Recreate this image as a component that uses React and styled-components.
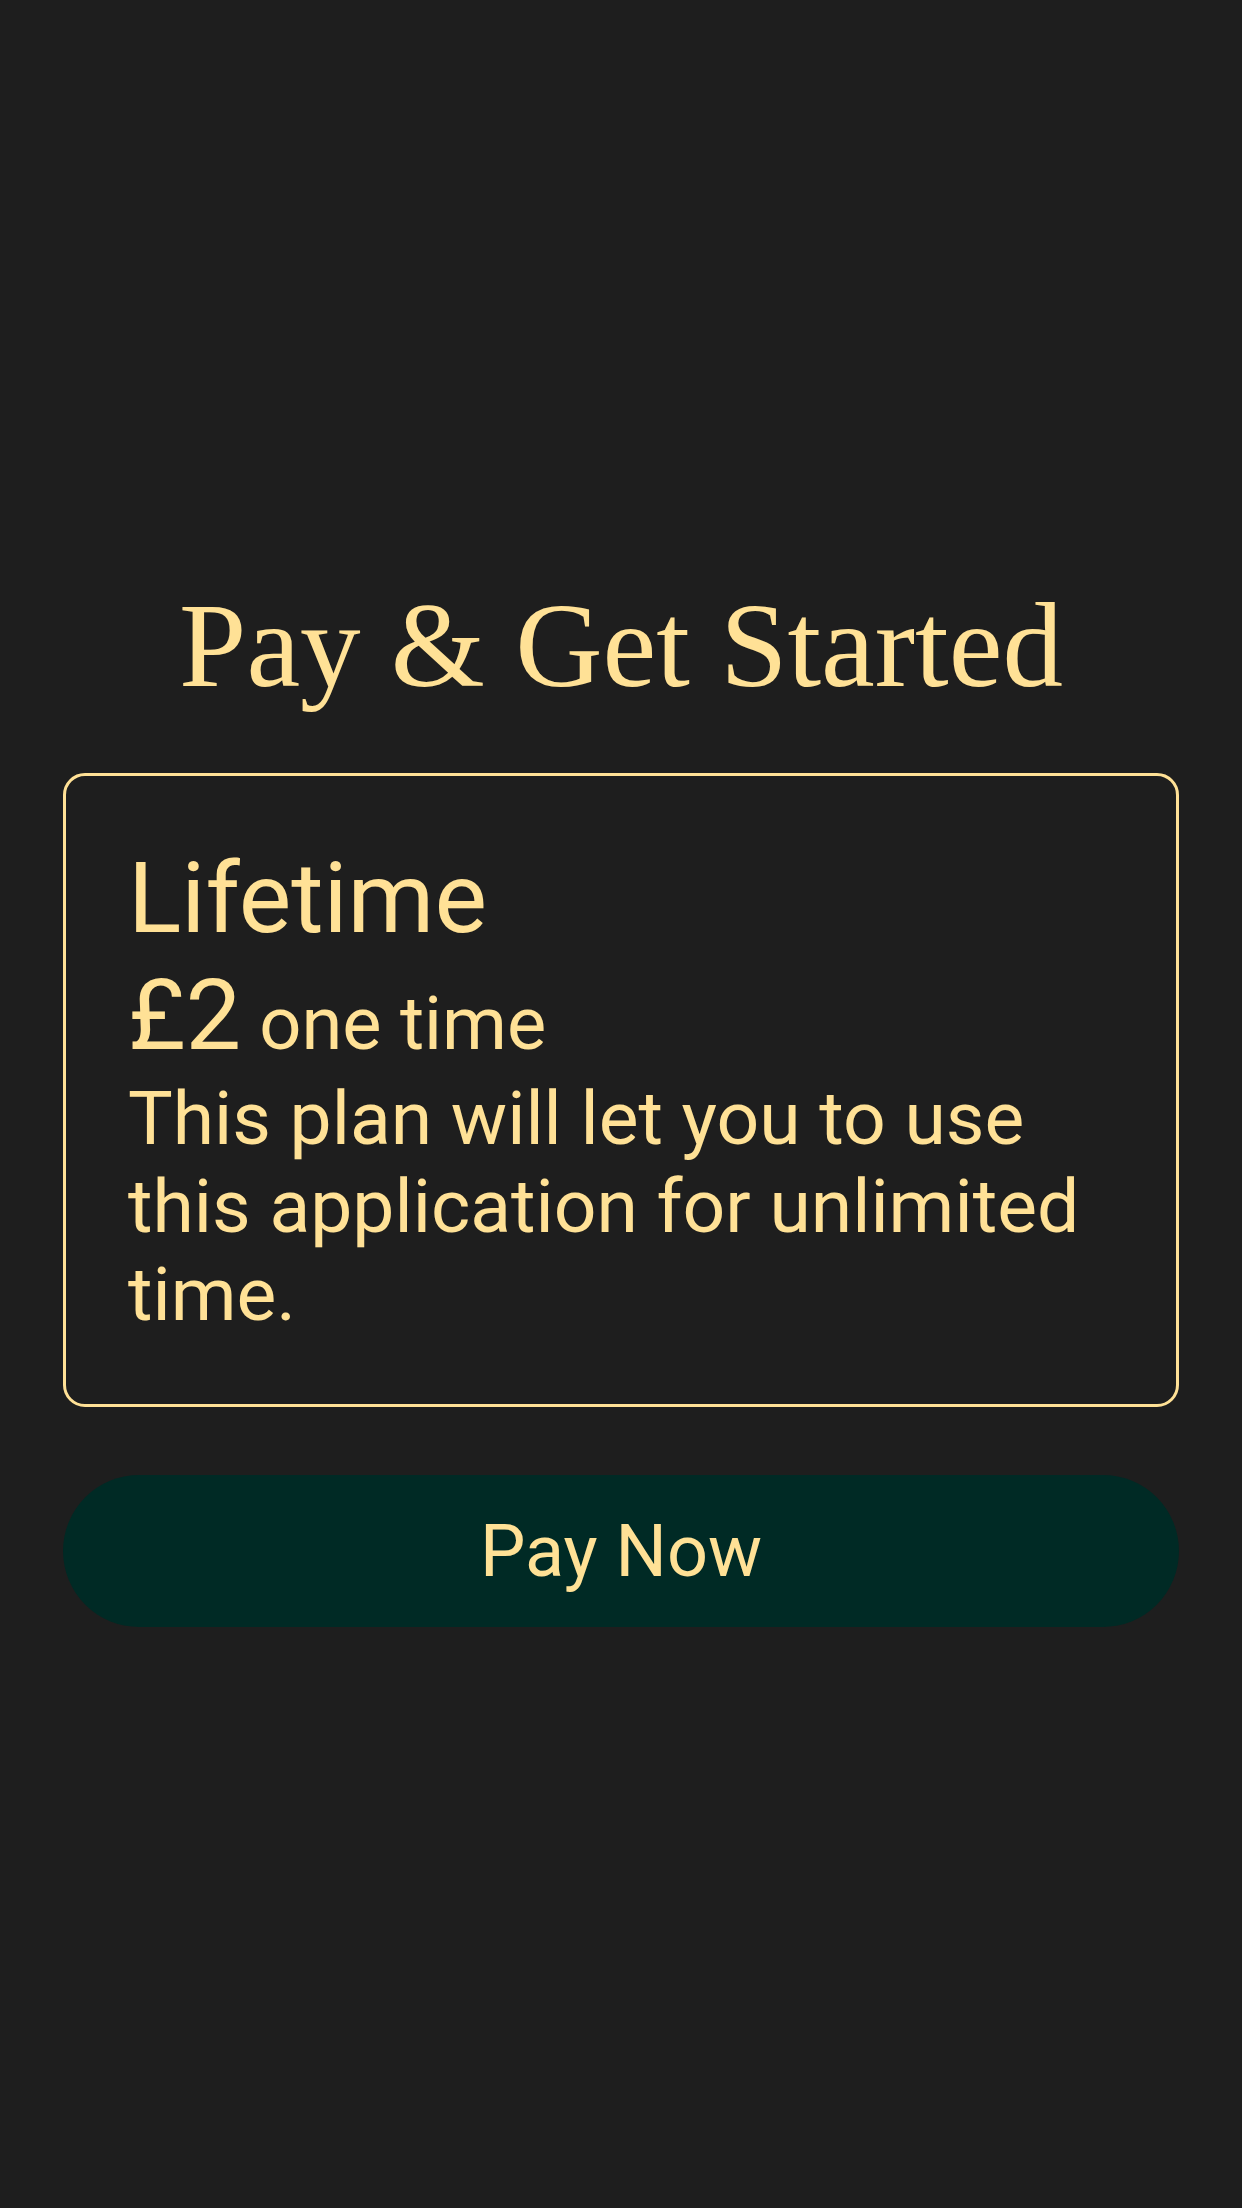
import React from "react";
import styled, { createGlobalStyle } from "styled-components";

const GlobalStyle = createGlobalStyle`
  html, body {
    margin: 0;
    padding: 0;
    background: #1e1e1e;
  }
  * { box-sizing: border-box; }
`;

const Page = styled.main`
  min-height: 2208px;
  background: #1e1e1e;
  padding: 575px 63px 0;
  display: flex;
  flex-direction: column;
  color: #ffe196;
  font-family: Roboto, "Noto Sans", sans-serif;
`;

const Title = styled.h1`
  margin: 0;
  font-family: "Liberation Serif", "DejaVu Serif", serif;
  font-weight: 400;
  font-size: 121px;
  line-height: 140px;
  text-align: center;
  color: #ffe196;
`;

const PlanCard = styled.section`
  margin-top: 58px;
  border: 3px solid #ffe196;
  border-radius: 22px;
  padding: 64px 56px 66px 62px;
  display: flex;
  flex-direction: column;
`;

const PlanName = styled.h2`
  margin: 0;
  font-weight: 400;
  font-size: 99px;
  line-height: 117px;
`;

const PriceRow = styled.div`
  font-size: 99px;
  line-height: 117px;
`;

const PriceNote = styled.span`
  font-size: 74px;
  line-height: 80px;
  margin-left: 18px;
`;

const Description = styled.p`
  margin: 0;
  font-size: 75px;
  line-height: 88px;
`;

const PayButton = styled.button`
  margin-top: 68px;
  height: 152px;
  border: none;
  border-radius: 76px;
  background: #002a25;
  color: #ffe196;
  font-family: Roboto, "Noto Sans", sans-serif;
  font-size: 72px;
  display: flex;
  align-items: center;
  justify-content: center;
  cursor: pointer;
`;

export default function App() {
  return (
    <>
      <GlobalStyle />
      <Page>
        <Title>Pay &amp; Get Started</Title>
        <PlanCard>
          <PlanName>Lifetime</PlanName>
          <PriceRow>
            £2<PriceNote>one time</PriceNote>
          </PriceRow>
          <Description>
            This plan will let you to use this application for unlimited time.
          </Description>
        </PlanCard>
        <PayButton>Pay Now</PayButton>
      </Page>
    </>
  );
}
